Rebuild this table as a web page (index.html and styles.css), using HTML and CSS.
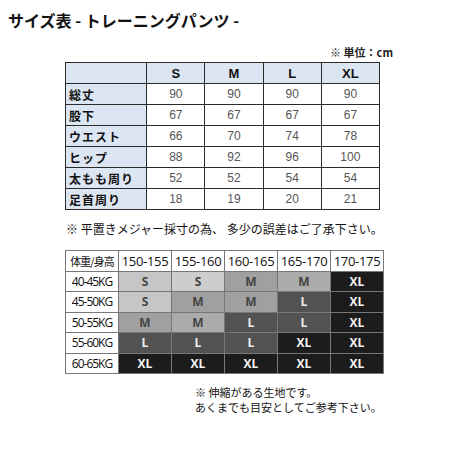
FILE: index.html
```html
<!DOCTYPE html>
<html lang="ja">
<head>
<meta charset="utf-8">
<link rel="stylesheet" href="styles.css">
</head>
<body>
<div class="page">
  <h1 class="title">サイズ表 - トレーニングパンツ -</h1>
  <div class="content">
    <p class="unit">※ 単位：cm</p>
    <table class="size">
      <tr class="head"><th class="lab"></th><th>S</th><th>M</th><th>L</th><th>XL</th></tr>
      <tr><th class="lab">総丈</th><td>90</td><td>90</td><td>90</td><td>90</td></tr>
      <tr><th class="lab">股下</th><td>67</td><td>67</td><td>67</td><td>67</td></tr>
      <tr><th class="lab">ウエスト</th><td>66</td><td>70</td><td>74</td><td>78</td></tr>
      <tr><th class="lab">ヒップ</th><td>88</td><td>92</td><td>96</td><td>100</td></tr>
      <tr><th class="lab">太もも周り</th><td>52</td><td>52</td><td>54</td><td>54</td></tr>
      <tr><th class="lab">足首周り</th><td>18</td><td>19</td><td>20</td><td>21</td></tr>
    </table>
    <p class="note">※ 平置きメジャー採寸の為、 多少の誤差はご了承下さい。</p>
    <table class="guide">
      <tr class="ghead"><th class="wlab">体重/身高</th><th>150-155</th><th>155-160</th><th>160-165</th><th>165-170</th><th>170-175</th></tr>
      <tr><th class="row">40-45KG</th><td class="s">S</td><td class="s2">S</td><td class="m">M</td><td class="m2">M</td><td class="xl">XL</td></tr>
      <tr><th class="row">45-50KG</th><td class="s">S</td><td class="m">M</td><td class="m">M</td><td class="l">L</td><td class="xl">XL</td></tr>
      <tr><th class="row">50-55KG</th><td class="m">M</td><td class="m2">M</td><td class="l">L</td><td class="l">L</td><td class="xl">XL</td></tr>
      <tr><th class="row">55-60KG</th><td class="l">L</td><td class="l">L</td><td class="l">L</td><td class="xl">XL</td><td class="xl">XL</td></tr>
      <tr><th class="row">60-65KG</th><td class="xl">XL</td><td class="xl">XL</td><td class="xl">XL</td><td class="xl">XL</td><td class="xl">XL</td></tr>
    </table>
    <div class="foot">
      <p>※ 伸縮がある生地です。</p>
      <p>あくまでも目安としてご参考下さい。</p>
    </div>
  </div>
</div>
</body>
</html>
```
FILE: styles.css
```css
* { box-sizing: border-box; }
html, body { margin: 0; padding: 0; background: #fff; }
body { font-family: "Noto Sans CJK JP", "Noto Sans", sans-serif; color: #111; }
.page { padding: 10px 0 0 8px; }
.title { margin: 0; font-size: 16px; line-height: 20px; font-weight: 700; color: #111; letter-spacing: 0; }
.content { margin-left: 57px; width: 330px; }
.unit { margin: 13px 0 0; font-size: 11px; line-height: 18px; font-weight: 700; text-align: right; color: #222; padding-right: 2px; }
.size { border-collapse: collapse; margin-top: 1px; width: 315px; table-layout: fixed; font-family: "Liberation Sans", "Noto Sans CJK JP", sans-serif; }
.size th, .size td { border: 1px solid #2a2a2a; height: 21px; padding: 0; font-size: 12px; }
.size td { text-align: center; color: #555; width: 58px; }
.size th { width: 58px; }
.size th.lab { width: 81px; background: #dce6f2; text-align: left; padding-left: 3px; font-weight: 700; color: #111; font-family: "Noto Sans CJK JP", sans-serif; font-size: 12px; letter-spacing: 1px; }
.size .head th { background: #dce6f2; font-weight: 700; color: #111; font-size: 13px; }
.note { margin: 10px 0 0; font-size: 12px; line-height: 18px; color: #111; white-space: nowrap; padding-left: 1px; }
.guide { border-collapse: collapse; margin-top: 12px; width: 318px; table-layout: fixed; font-family: "Open Sans", "Noto Sans CJK JP", sans-serif; }
.guide th, .guide td { border: 1px solid #777; height: 20.5px; padding: 0; text-align: center; width: 53px; }
.ghead th { background: #fff; font-weight: 400; font-size: 13px; color: #111; letter-spacing: -0.3px; }
.ghead th.wlab { font-family: "Noto Sans CJK JP", sans-serif; font-size: 11px; letter-spacing: -1px; }
.guide th.row { background: #fff; font-weight: 400; font-size: 12px; color: #111; letter-spacing: -1px; }
.guide td { font-size: 12px; font-weight: 700; }
.guide .s { background: #c6c6c6; color: #444; }
.guide .s2 { background: #cdcdcd; color: #444; }
.guide .m { background: #a0a0a0; color: #444; }
.guide .m2 { background: #ababab; color: #444; }
.guide .l { background: #525252; color: #eee; }
.guide .xl { background: #1c1c1c; color: #f4f4f4; }
.foot { margin: 11px 0 0 130px; font-size: 11px; line-height: 15px; color: #111; }
.foot p { margin: 0; white-space: nowrap; }
```
